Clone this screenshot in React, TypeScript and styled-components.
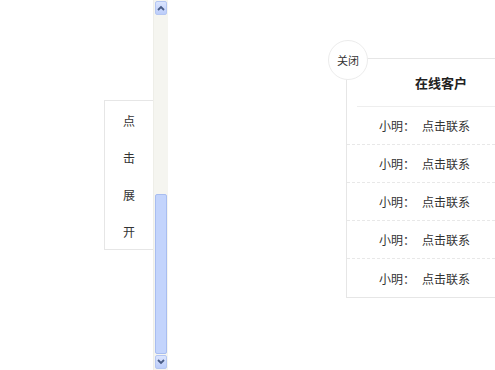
import styled, { createGlobalStyle } from 'styled-components'

const Global = createGlobalStyle`
  html, body {
    margin: 0;
    padding: 0;
    background: #fff;
    overflow: hidden;
    font-family: "Noto Sans CJK SC", "Microsoft YaHei", sans-serif;
    color: #333;
  }
`

const Page = styled.div`
  display: flex;
  align-items: flex-start;
  width: 495px;
  height: 370px;
  padding-left: 104px;
  box-sizing: border-box;
  overflow: hidden;
  & > * {
    flex-shrink: 0;
  }
`

const Toggle = styled.div`
  margin-top: 100px;
  width: 49px;
  height: 150px;
  box-sizing: border-box;
  border: 1px solid #e6e6e6;
  border-right: none;
  padding-top: 1px;
  display: flex;
  flex-direction: column;
  align-items: center;
`

const ToggleChar = styled.span`
  font-size: 12px;
  line-height: 37px;
  color: #333;
`

const Scrollbar = styled.div`
  width: 15px;
  height: 370px;
  display: flex;
  flex-direction: column;
  background: #f5f5f0;
  border-left: 1px solid #eeeee8;
  box-sizing: border-box;
`

const Arrow = styled.div`
  height: 14px;
  margin: 1px;
  border: 1px solid #b4c6f2;
  border-radius: 2px;
  background: linear-gradient(#dbe5fe, #bccdfa);
  display: flex;
  align-items: center;
  justify-content: center;
  box-sizing: border-box;
`

const Track = styled.div<{ $grow: number }>`
  flex: ${(p) => p.$grow};
`

const Thumb = styled.div`
  height: 160px;
  margin: 0 1px;
  border: 1px solid #a8bdf0;
  border-radius: 2px;
  background: #c3d4fc;
  box-sizing: border-box;
`

const Panel = styled.div`
  position: relative;
  margin-left: 178px;
  margin-top: 58px;
  width: 190px;
  border: 1px solid #e6e6e6;
  box-sizing: border-box;
  background: #fff;
`

const Close = styled.div`
  position: absolute;
  left: -19px;
  top: -19px;
  width: 40px;
  height: 40px;
  border-radius: 50%;
  border: 1px solid #ececec;
  background: #fff;
  display: flex;
  align-items: center;
  justify-content: center;
  box-sizing: border-box;
  font-size: 11px;
  color: #333;
`

const Title = styled.div`
  height: 47px;
  margin-left: 10px;
  border-bottom: 1px solid #eeeeee;
  display: flex;
  align-items: center;
  justify-content: center;
  padding-right: 10px;
  font-size: 13px;
  font-weight: bold;
  color: #222;
`

const Row = styled.div`
  height: 38px;
  display: flex;
  align-items: center;
  gap: 7px;
  padding-left: 32px;
  font-size: 12px;
  color: #333;
  box-sizing: border-box;
  border-bottom: 1px dashed #e8e8e8;
  &:last-child {
    border-bottom: none;
  }
`

const Chevron = ({ up }: { up?: boolean }) => (
  <svg width="8" height="6" viewBox="0 0 8 6">
    <path
      d={up ? 'M1 5 L4 2 L7 5' : 'M1 1 L4 4 L7 1'}
      fill="none"
      stroke="#4a5d86"
      strokeWidth="1.8"
    />
  </svg>
)

const rows = [1, 2, 3, 4, 5]

export default function App() {
  return (
    <>
      <Global />
      <Page>
        <Toggle>
          {['点', '击', '展', '开'].map((c) => (
            <ToggleChar key={c}>{c}</ToggleChar>
          ))}
        </Toggle>
        <Scrollbar>
          <Arrow>
            <Chevron up />
          </Arrow>
          <Track $grow={1} />
          <Thumb />
          <Arrow>
            <Chevron />
          </Arrow>
        </Scrollbar>
        <Panel>
          <Close>关闭</Close>
          <Title>在线客户</Title>
          {rows.map((i) => (
            <Row key={i}>
              <span>小明：</span>
              <span>点击联系</span>
            </Row>
          ))}
        </Panel>
      </Page>
    </>
  )
}
